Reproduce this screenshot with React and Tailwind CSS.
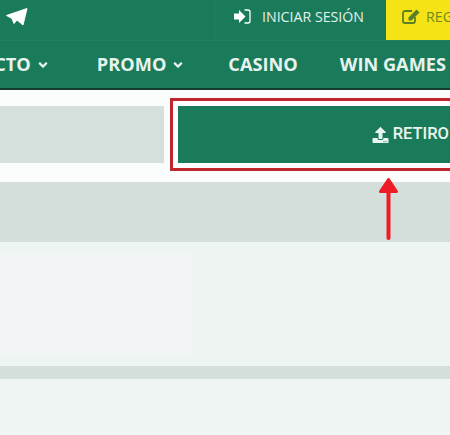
import { FaUpload, FaAngleDown } from 'react-icons/fa';

function NavItem({ label, hasMenu, className }) {
  return (
    <span className={`flex items-center gap-[5px] ${className || ''}`}>
      {label}
      {hasMenu && <FaAngleDown className="w-[14px] h-[14px] mt-[2px] mr-[1px]" />}
    </span>
  );
}

export default function App() {
  return (
    <div className="w-[450px] h-[435px] overflow-hidden bg-[#eef4f2] font-['Open_Sans',sans-serif]">
      <header className="bg-[#1a7b5a] border-b-2 border-[#123d30]">
        <div className="h-[41px] flex border-b border-[#238063]">
          <div className="w-[215px] border-r border-[#238063] pl-[6px] pt-[8px] text-white">
            <svg width="22" height="18" viewBox="0 0 22 18" fill="currentColor">
              <path d="M21 .5 .5 7.5 6 10.5 8 15.5 11 12 17 17Z" stroke="currentColor" strokeWidth="1" strokeLinejoin="round" />
            </svg>
          </div>
          <div className="w-[171px] flex items-center pl-[19px] pb-[6px] gap-[11px] text-[#e4f1ec] text-[14.2px] whitespace-nowrap">
            <svg className="shrink-0 -mt-[1px]" width="17" height="15" viewBox="0 0 17 15" fill="none">
              <path d="M0 4.5H5V1L11.5 7.5 5 14V10.5H0Z" fill="white" />
              <path d="M10.5 1H14C15.2 1 16 1.8 16 3V12C16 13.2 15.2 14 14 14H10.5" stroke="white" strokeWidth="1.3" />
            </svg>
            INICIAR SESIÓN
          </div>
          <div className="flex-1 bg-[#f6e316] flex items-center pl-[16px] pb-[6px] gap-[6px] text-[#6e8a1f] text-[14.2px] whitespace-nowrap overflow-hidden">
            <svg className="shrink-0 -mt-[1px]" width="18" height="15" viewBox="0 0 18 15" fill="none">
              <path d="M10 2H3C1.8 2 1 2.8 1 4V12C1 13.2 1.8 14 3 14H11C12.2 14 13 13.2 13 12V8" stroke="#5c7f24" strokeWidth="1.8" />
              <path d="M14.5 .5 17.5 3.5 9.5 11.5H6.5V8.5Z" fill="#5c7f24" />
            </svg>
            REGISTRO
          </div>
        </div>
        <nav className="h-[47px] flex items-center justify-end pr-[4px] gap-[42px] text-[#e6f3ee] text-[18.2px] font-bold whitespace-nowrap overflow-hidden">
          <NavItem label="PRODUCTO" hasMenu className="mr-[4px]" />
          <NavItem label="PROMO" hasMenu />
          <NavItem label="CASINO" />
          <NavItem label="WIN GAMES" />
        </nav>
      </header>

      <main className="bg-white">
        <div className="flex items-center gap-[6px] pt-[8px] pb-[11px] bg-[#fbfdfc]">
          <div className="w-[164px] h-[57px] bg-[#d5dfdc]" />
          <div className="flex-1 h-[73px] border-[3px] border-r-0 border-[#c0272d] bg-white pl-[5px] py-[5px]">
            <div className="h-full bg-[#1a7b5a] flex items-center justify-end pr-[1px] gap-[4px] text-[#eaf5f1] text-[16.5px] font-medium font-['Roboto',sans-serif] whitespace-nowrap">
              <FaUpload className="w-[17px] h-[16px]" />
              RETIRO
            </div>
          </div>
        </div>

        <div className="relative h-[60px] bg-[#d4dedb]">
          <svg className="absolute left-[378px] top-[-5px]" width="21" height="64" viewBox="0 0 21 64" fill="none">
            <path d="M10.5 2.5 18.5 14.5H2.5Z" fill="#ee1c25" stroke="#ee1c25" strokeWidth="3" strokeLinejoin="round" />
            <path d="M10.5 14V61" stroke="#ee1c25" strokeWidth="4" strokeLinecap="round" />
          </svg>
        </div>

        <div className="h-[124px] bg-[#edf4f2] pt-[10px]">
          <div className="w-[192px] h-[104px] bg-[#f1f5f5]" />
        </div>
        <div className="h-[13px] bg-[#d4dedb]" />
        <div className="h-[56px] bg-[#eef5f3]" />
      </main>
    </div>
  );
}
